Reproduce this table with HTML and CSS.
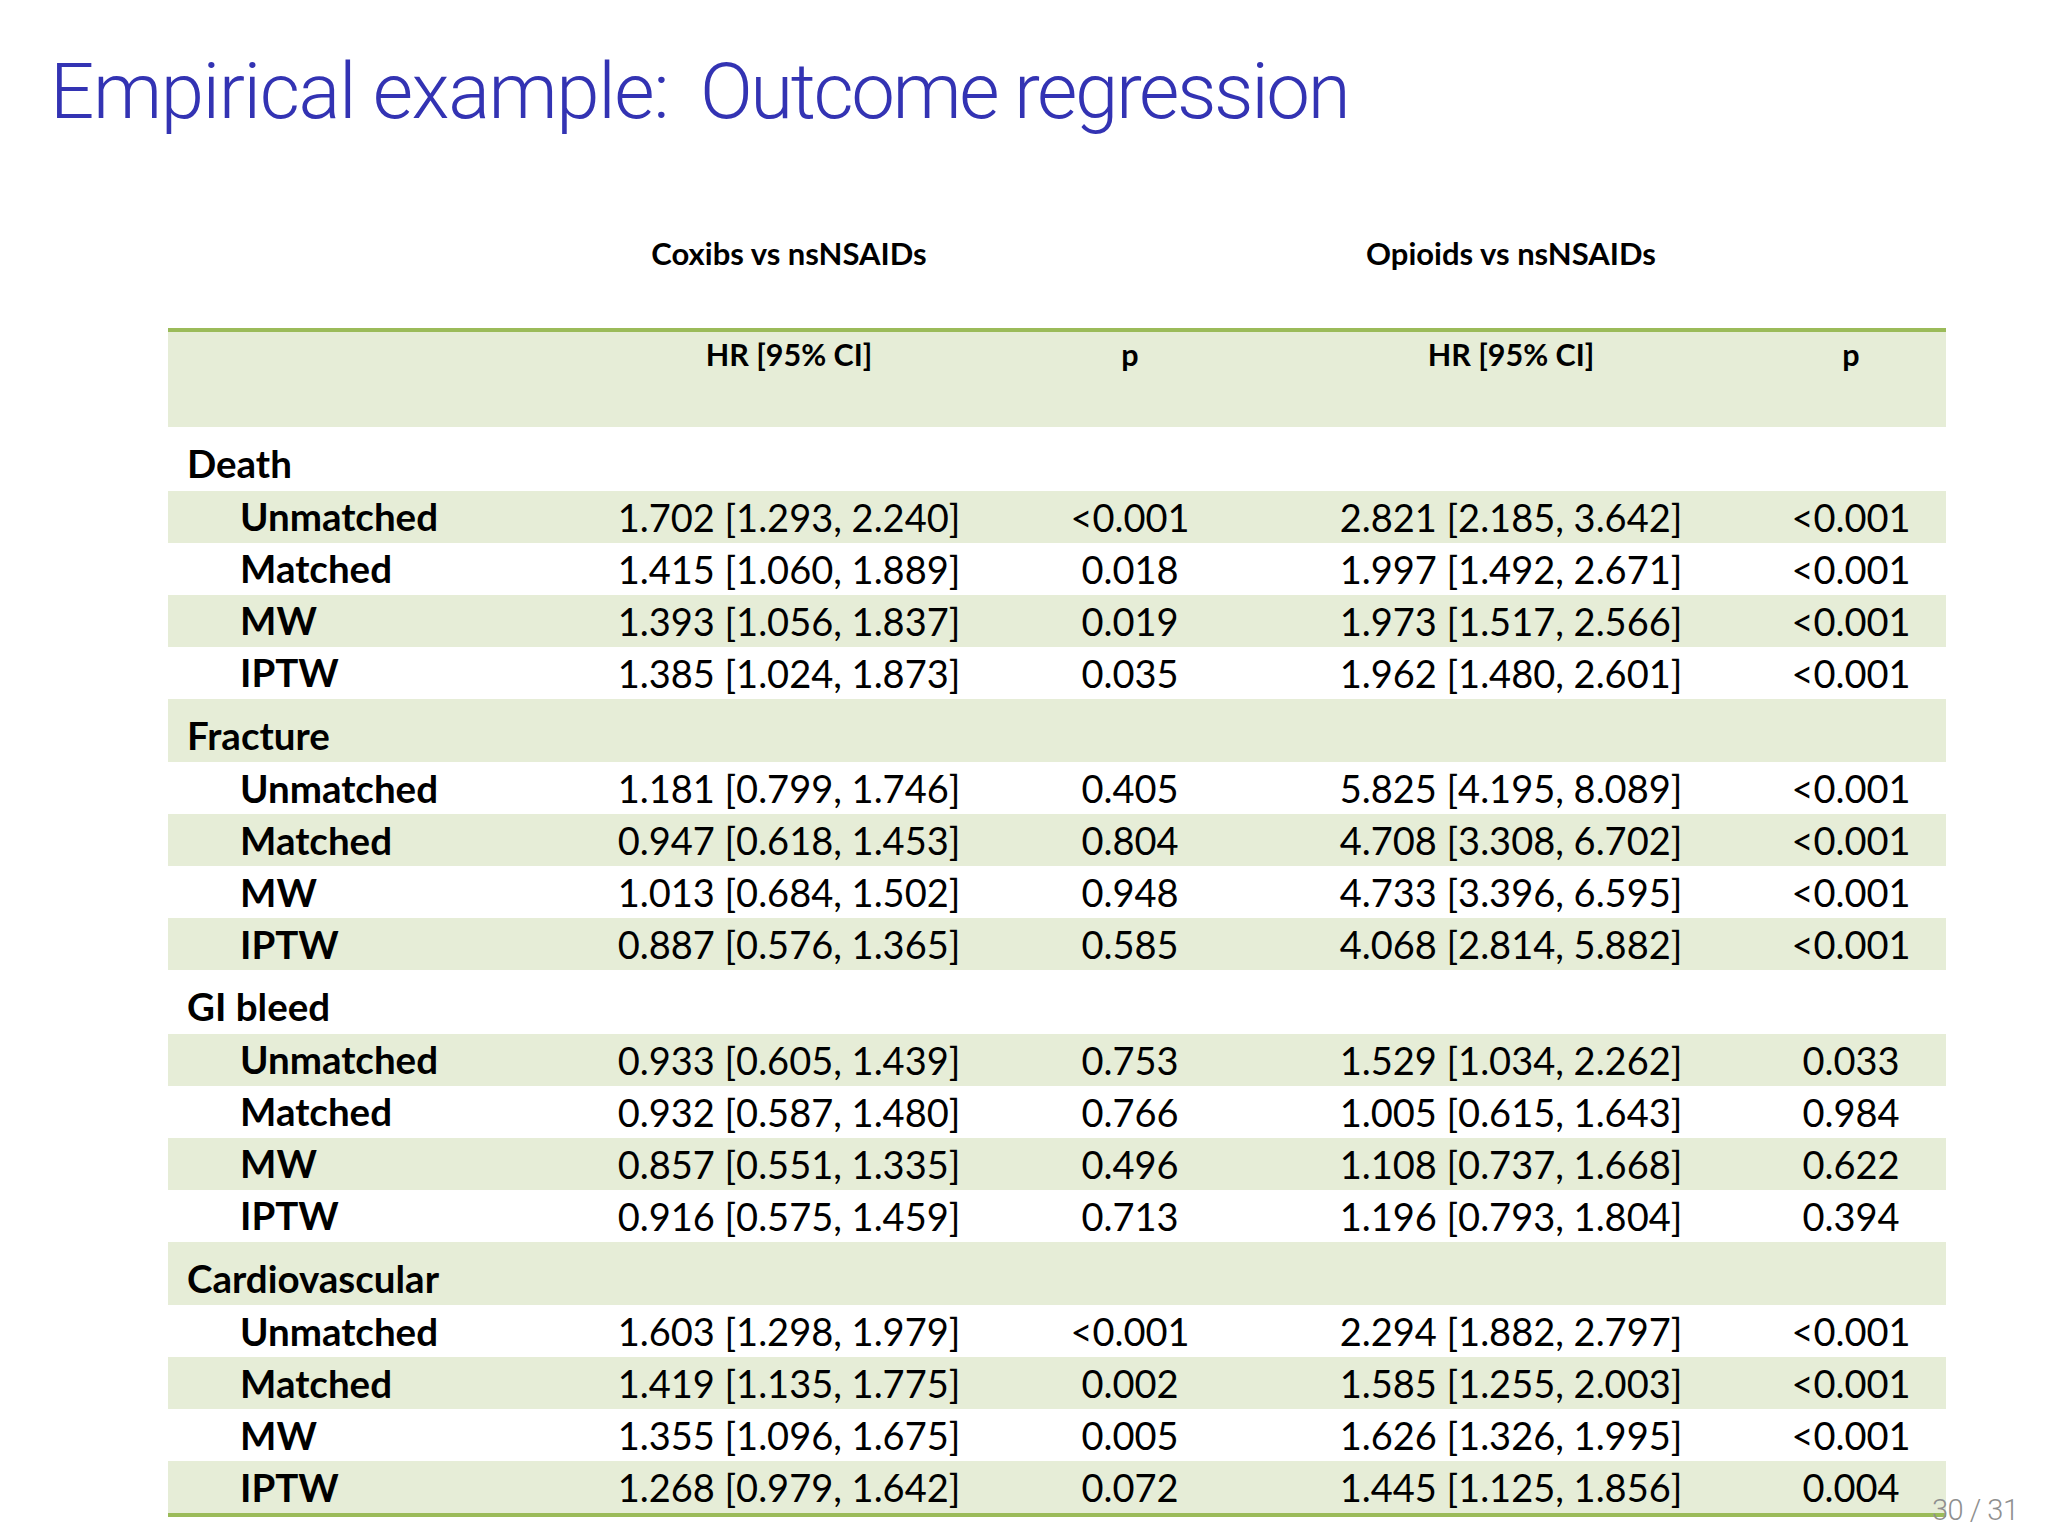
FILE: index.html
```html
<!DOCTYPE html>
<html lang="en">
<head>
<meta charset="utf-8">
<title>Empirical example: Outcome regression</title>
<link rel="stylesheet" href="styles.css">
</head>
<body>
<div class="slide">
  <h1 class="title">Empirical example: <span class="title-tail">Outcome regression</span></h1>
  <table class="results">
    <colgroup>
      <col class="c-label">
      <col class="c-hr1">
      <col class="c-p1">
      <col class="c-hr2">
      <col class="c-p2">
      <col class="c-pad">
    </colgroup>
    <thead>
      <tr class="group-row">
        <th></th>
        <th>Coxibs vs nsNSAIDs</th>
        <th></th>
        <th>Opioids vs nsNSAIDs</th>
        <th></th>
        <th></th>
      </tr>
      <tr class="head-row">
        <th></th>
        <th>HR [95% CI]</th>
        <th>p</th>
        <th>HR [95% CI]</th>
        <th>p</th>
        <th></th>
      </tr>
    </thead>
    <tbody>
      <tr class="section"><td class="sec">Death</td><td></td><td></td><td></td><td></td><td></td></tr>
      <tr class="data band"><td class="sub">Unmatched</td><td>1.702 [1.293, 2.240]</td><td>&lt;0.001</td><td>2.821 [2.185, 3.642]</td><td>&lt;0.001</td><td></td></tr>
      <tr class="data"><td class="sub">Matched</td><td>1.415 [1.060, 1.889]</td><td>0.018</td><td>1.997 [1.492, 2.671]</td><td>&lt;0.001</td><td></td></tr>
      <tr class="data band"><td class="sub">MW</td><td>1.393 [1.056, 1.837]</td><td>0.019</td><td>1.973 [1.517, 2.566]</td><td>&lt;0.001</td><td></td></tr>
      <tr class="data"><td class="sub">IPTW</td><td>1.385 [1.024, 1.873]</td><td>0.035</td><td>1.962 [1.480, 2.601]</td><td>&lt;0.001</td><td></td></tr>

      <tr class="section band"><td class="sec">Fracture</td><td></td><td></td><td></td><td></td><td></td></tr>
      <tr class="data"><td class="sub">Unmatched</td><td>1.181 [0.799, 1.746]</td><td>0.405</td><td>5.825 [4.195, 8.089]</td><td>&lt;0.001</td><td></td></tr>
      <tr class="data band"><td class="sub">Matched</td><td>0.947 [0.618, 1.453]</td><td>0.804</td><td>4.708 [3.308, 6.702]</td><td>&lt;0.001</td><td></td></tr>
      <tr class="data"><td class="sub">MW</td><td>1.013 [0.684, 1.502]</td><td>0.948</td><td>4.733 [3.396, 6.595]</td><td>&lt;0.001</td><td></td></tr>
      <tr class="data band"><td class="sub">IPTW</td><td>0.887 [0.576, 1.365]</td><td>0.585</td><td>4.068 [2.814, 5.882]</td><td>&lt;0.001</td><td></td></tr>

      <tr class="section"><td class="sec">GI bleed</td><td></td><td></td><td></td><td></td><td></td></tr>
      <tr class="data band"><td class="sub">Unmatched</td><td>0.933 [0.605, 1.439]</td><td>0.753</td><td>1.529 [1.034, 2.262]</td><td>0.033</td><td></td></tr>
      <tr class="data"><td class="sub">Matched</td><td>0.932 [0.587, 1.480]</td><td>0.766</td><td>1.005 [0.615, 1.643]</td><td>0.984</td><td></td></tr>
      <tr class="data band"><td class="sub">MW</td><td>0.857 [0.551, 1.335]</td><td>0.496</td><td>1.108 [0.737, 1.668]</td><td>0.622</td><td></td></tr>
      <tr class="data"><td class="sub">IPTW</td><td>0.916 [0.575, 1.459]</td><td>0.713</td><td>1.196 [0.793, 1.804]</td><td>0.394</td><td></td></tr>

      <tr class="section band"><td class="sec">Cardiovascular</td><td></td><td></td><td></td><td></td><td></td></tr>
      <tr class="data"><td class="sub">Unmatched</td><td>1.603 [1.298, 1.979]</td><td>&lt;0.001</td><td>2.294 [1.882, 2.797]</td><td>&lt;0.001</td><td></td></tr>
      <tr class="data band"><td class="sub">Matched</td><td>1.419 [1.135, 1.775]</td><td>0.002</td><td>1.585 [1.255, 2.003]</td><td>&lt;0.001</td><td></td></tr>
      <tr class="data"><td class="sub">MW</td><td>1.355 [1.096, 1.675]</td><td>0.005</td><td>1.626 [1.326, 1.995]</td><td>&lt;0.001</td><td></td></tr>
      <tr class="data band last"><td class="sub">IPTW</td><td>1.268 [0.979, 1.642]</td><td>0.072</td><td>1.445 [1.125, 1.856]</td><td>0.004</td><td></td></tr>
    </tbody>
  </table>
  <div class="pagenum">30 / 31</div>
</div>
</body>
</html>
```

FILE: styles.css
```css
html, body {
  margin: 0;
  padding: 0;
  background: #ffffff;
}

.slide {
  position: relative;
  width: 2048px;
  height: 1536px;
  overflow: hidden;
  background: #ffffff;
}

.title {
  margin: 0;
  padding: 53px 0 0 50px;
  font-family: Roboto, "Liberation Sans", sans-serif;
  font-weight: 300;
  font-size: 78px;
  letter-spacing: -1.4px;
  line-height: 1;
  color: #3333b3;
  white-space: nowrap;
}

.title-tail {
  margin-left: 14px;
  letter-spacing: -2.4px;
}

.results {
  margin: 69px 0 0 168px;
  border-collapse: separate;
  border-spacing: 0;
  table-layout: fixed;
  width: 1778px;
  font-family: Lato, "Liberation Sans", sans-serif;
  color: #000000;
}

.c-label { width: 392px; }
.c-hr1 { width: 458px; }
.c-p1 { width: 224px; }
.c-hr2 { width: 538px; }
.c-p2 { width: 142px; }
.c-pad { width: 24px; }

.results th,
.results td {
  padding: 0;
  text-align: center;
  white-space: nowrap;
  line-height: 1;
}

.group-row { height: 128px; }
.group-row th {
  vertical-align: bottom;
  padding-bottom: 59px;
  font-size: 31px;
  font-weight: 700;
}

.head-row { height: 99px; background: #e6edd7; }
.head-row th {
  vertical-align: top;
  border-top: 4px solid #9bbb59;
  padding-top: 7px;
  font-size: 30.5px;
  font-weight: 700;
}

.section { height: 63.5px; }
.data { height: 52px; }
.band { background: #e6edd7; }

.results td {
  vertical-align: bottom;
  padding-bottom: 7px;
  font-size: 38px;
  font-weight: 400;
}

.results td.sec,
.results td.sub {
  text-align: left;
  font-weight: 700;
  font-size: 38.5px;
}
.results td.sec { padding-left: 19px; padding-bottom: 8px; }
.results td.sub { padding-left: 72px; }

.last { height: 56px; }
.last td {
  border-bottom: 4px solid #9bbb59;
}

.pagenum {
  position: absolute;
  left: 1932px;
  top: 1496px;
  font-family: Roboto, "Liberation Sans", sans-serif;
  font-weight: 300;
  font-size: 29px;
  letter-spacing: -0.5px;
  line-height: 1;
  color: #8f8f8f;
  white-space: nowrap;
}
```
